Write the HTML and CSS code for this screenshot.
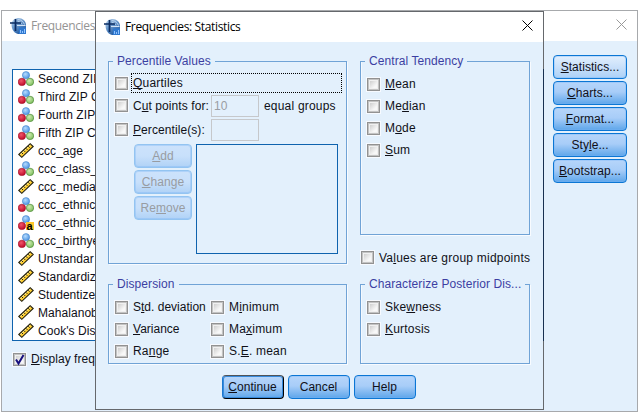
FILE: index.html
```html
<!DOCTYPE html>
<html lang="en">
<head>
<meta charset="utf-8">
<title>Frequencies</title>
<link rel="stylesheet" href="styles.css">
</head>
<body>
<svg width="0" height="0" class="defs">
  <defs>
    <radialGradient id="blue" cx=".4" cy=".35" r=".65"><stop offset="0" stop-color="#b5dcff"/><stop offset="1" stop-color="#4f95e2"/></radialGradient>
    <radialGradient id="red" cx=".4" cy=".35" r=".65"><stop offset="0" stop-color="#f0566a"/><stop offset="1" stop-color="#c00a28"/></radialGradient>
    <radialGradient id="green" cx=".4" cy=".35" r=".65"><stop offset="0" stop-color="#cdebb0"/><stop offset="1" stop-color="#80bf60"/></radialGradient>
    <linearGradient id="disc" x1="0" y1="0" x2=".6" y2="1"><stop offset="0" stop-color="#c3daf0"/><stop offset=".5" stop-color="#6796cb"/><stop offset="1" stop-color="#1d57a0"/></linearGradient>
    <symbol id="app" viewBox="0 0 16 16">
      <path d="M1.500 6C2 2 5 0 8.500 0 12.500 0 16 3.200 16 7v9H8.500C4.500 15.500 1.500 12 1.500 6z" fill="url(#disc)"/>
      <path d="M8 1.500c3.500 .3 5.500 2.500 6.500 5M8 3.500c2 .2 3.500 1.300 4 3" fill="none" stroke="#b9d2ec"/>
      <path d="M0 5h11M5.500 1v12" stroke="#0b2c62" stroke-width="1.700"/>
      <path d="M7 7.500h8.500" stroke="#d3e4f6"/>
      <path d="M9 9.500h7V16H9z" fill="#2f78cf"/>
      <path d="M10.500 15v-3M12.500 15v-2M14.500 15v-4" stroke="#8fc2ff"/>
    </symbol>
    <symbol id="nominal" viewBox="0 0 16 16">
      <circle cx="8" cy="4.200" r="3.600" fill="url(#blue)" stroke="#4483cb" stroke-width=".6"/>
      <circle cx="3.900" cy="10.900" r="3.700" fill="url(#red)" stroke="#a01028" stroke-width=".6"/>
      <circle cx="12" cy="10.900" r="3.700" fill="url(#green)" stroke="#508b3c" stroke-width=".7"/>
    </symbol>
    <symbol id="string" viewBox="0 0 16 16">
      <circle cx="8" cy="4.200" r="3.600" fill="url(#blue)" stroke="#4483cb" stroke-width=".6"/>
      <circle cx="3.900" cy="10.900" r="3.700" fill="url(#red)" stroke="#a01028" stroke-width=".6"/>
      <rect x="8" y="7" width="8" height="8" fill="#ffc629"/>
      <text x="8.600" y="14.600" class="glyph">a</text>
    </symbol>
    <symbol id="scale" viewBox="0 0 16 16">
      <path d="M.8 11.500 12.200.8 15.200 3.500 3.800 14.300z" fill="#ffcf33" stroke="#25210f" stroke-width="1.100"/>
      <path d="M2 11.700 12.400 2" stroke="#fff0a0" stroke-width=".8"/>
      <path d="M3.500 9.500 5 11M5.700 7.400 7.200 8.900M7.900 5.300 9.400 6.800M10.100 3.200 11.600 4.700" stroke="#25210f"/>
    </symbol>
  </defs>
</svg>

<main class="window">
  <header class="titlebar inactive">
    <svg class="app"><use href="#app"/></svg><span>Frequencies</span>
    <svg class="close" viewBox="0 0 11 11"><path d="M.5.5l10 10M10.500.5l-10 10"/></svg>
  </header>
  <div class="content">
    <div class="variables">
      <ul class="list">
        <li><svg><use href="#nominal"/></svg>Second ZIP</li>
        <li><svg><use href="#nominal"/></svg>Third ZIP C</li>
        <li><svg><use href="#nominal"/></svg>Fourth ZIP</li>
        <li><svg><use href="#nominal"/></svg>Fifth ZIP Co</li>
        <li><svg><use href="#scale"/></svg>ccc_age</li>
        <li><svg><use href="#nominal"/></svg>ccc_class_</li>
        <li><svg><use href="#scale"/></svg>ccc_media</li>
        <li><svg><use href="#nominal"/></svg>ccc_ethnic</li>
        <li><svg><use href="#string"/></svg>ccc_ethnic</li>
        <li><svg><use href="#nominal"/></svg>ccc_birthye</li>
        <li><svg><use href="#scale"/></svg>Unstandar</li>
        <li><svg><use href="#scale"/></svg>Standardiz</li>
        <li><svg><use href="#scale"/></svg>Studentize</li>
        <li><svg><use href="#scale"/></svg>Mahalanob</li>
        <li><svg><use href="#scale"/></svg>Cook's Dis</li>
      </ul>
      <div class="check display"><i class="box"><svg viewBox="0 0 13 13"><path d="M3 6.500l2.500 4L10.500 2"/></svg></i><span><u>D</u>isplay freq</span></div>
    </div>
    <nav class="side">
      <button class="btn light"><span><u>S</u>tatistics...</span></button>
      <button class="btn"><span><u>C</u>harts...</span></button>
      <button class="btn"><span><u>F</u>ormat...</span></button>
      <button class="btn"><span>Sty<u>l</u>e...</span></button>
      <button class="btn"><span><u>B</u>ootstrap...</span></button>
    </nav>
  </div>
</main>

<section class="dialog">
  <header class="titlebar">
    <svg class="app"><use href="#app"/></svg><span>Frequencies: Statistics</span>
    <svg class="close" viewBox="0 0 11 11"><path d="M.5.5l10 10M10.500.5l-10 10"/></svg>
  </header>
  <div class="panes">
    <div class="column">
      <fieldset class="percentiles">
        <legend>Percentile Values</legend>
        <div class="check quartiles"><i class="box"></i><span class="focus"><u>Q</u>uartiles</span></div>
        <div class="check entry"><i class="box"></i><span class="caption">C<u>u</u>t points for:</span><span class="field">10</span><span class="suffix">equal groups</span></div>
        <div class="check entry"><i class="box"></i><span class="caption"><u>P</u>ercentile(s):</span><span class="field"></span></div>
        <div class="editor">
          <div class="actions">
            <button class="btn off"><span><u>A</u>dd</span></button>
            <button class="btn off"><span><u>C</u>hange</span></button>
            <button class="btn off"><span>Re<u>m</u>ove</span></button>
          </div>
          <div class="values"></div>
        </div>
      </fieldset>
      <fieldset class="bottom dispersion">
        <legend>Dispersion</legend>
        <div class="check"><i class="box"></i><span class="tight">S<u>t</u>d. deviation</span></div>
        <div class="check"><i class="box"></i><span>M<u>i</u>nimum</span></div>
        <div class="check"><i class="box"></i><span class="tight"><u>V</u>ariance</span></div>
        <div class="check"><i class="box"></i><span>Ma<u>x</u>imum</span></div>
        <div class="check"><i class="box"></i><span>Ra<u>n</u>ge</span></div>
        <div class="check"><i class="box"></i><span>S.<u>E</u>. mean</span></div>
      </fieldset>
    </div>
    <div class="column">
      <fieldset class="central">
        <legend>Central Tendency</legend>
        <div class="check"><i class="box"></i><span><u>M</u>ean</span></div>
        <div class="check"><i class="box"></i><span>Me<u>d</u>ian</span></div>
        <div class="check"><i class="box"></i><span>M<u>o</u>de</span></div>
        <div class="check"><i class="box"></i><span><u>S</u>um</span></div>
      </fieldset>
      <div class="check midpoints"><i class="box"></i><span>Va<u>l</u>ues are group midpoints</span></div>
      <fieldset class="bottom">
        <legend>Characterize Posterior Dis...</legend>
        <div class="check"><i class="box"></i><span>Ske<u>w</u>ness</span></div>
        <div class="check"><i class="box"></i><span><u>K</u>urtosis</span></div>
      </fieldset>
    </div>
  </div>
  <footer class="buttons">
    <button class="btn default"><span><u>C</u>ontinue</span></button>
    <button class="btn"><span>Cancel</span></button>
    <button class="btn"><span>Help</span></button>
  </footer>
</section>
</body>
</html>
```
FILE: styles.css
```css
* { box-sizing: border-box; }
body {
  margin: 0;
  padding: 10px 0 0 1px;
  width: 644px;
  height: 417px;
  overflow: hidden;
  background: #fff;
  color: #101018;
  font: 12px/14px "Liberation Sans", Arial, sans-serif;
  letter-spacing: .2px;
  white-space: nowrap;
}
.defs { position: absolute; }
u { text-decoration: underline; text-decoration-thickness: 1px; text-underline-offset: 1px; text-decoration-skip-ink: none; }
.glyph { font: bold 11px "Liberation Sans", Arial, sans-serif; fill: #000; }

.window {
  width: 637px;
  height: 402px;
  border: 1px solid #a7a9ac;
  background: #e3f0fc;
}
.dialog {
  position: absolute;
  left: 95px;
  top: 11px;
  width: 449px;
  height: 399px;
  border: 1px solid #65686c;
  background: #e3f0fc;
}
.dialog::after {
  content: "";
  position: absolute;
  right: -1px;
  top: 57px;
  width: 1px;
  height: 272px;
  background: #183050;
}
.titlebar {
  display: flex;
  align-items: center;
  height: 30px;
  padding: 0 10px 1px 8px;
  background: #fff;
  color: #000;
  font: 12px/16px "Open Sans", "Noto Sans", sans-serif;
  letter-spacing: -.35px;
}
.titlebar.inactive { color: #949494; }
.app { width: 16px; height: 16px; margin-right: 5px; }
.close { width: 11px; height: 11px; margin: 0 0 2px auto; fill: none; stroke: currentColor; }
.inactive .close { stroke: #999; }

.content { display: flex; justify-content: space-between; padding: 14px 10px 0 10px; }
.variables { width: 110px; padding-top: 14px; letter-spacing: .05px; }
.list {
  margin: 0;
  padding: 0 0 0 5px;
  height: 272px;
  border: 1px solid #0f63ae;
  background: #fff;
  list-style: none;
}
.list li { display: flex; align-items: center; height: 18px; }
.list svg { width: 16px; height: 16px; margin-right: 4px; flex: none; }
.side { display: flex; flex-direction: column; gap: 2px; width: 74px; }

.btn {
  height: 24px;
  padding: 0;
  border: 1px solid #0b76d4;
  border-radius: 4px;
  background: linear-gradient(#b6d5fa, #a8cdf8 45%, #5ea6ea);
  box-shadow: inset 0 0 0 1px rgba(120, 180, 245, .35);
  color: inherit;
  font: inherit;
  letter-spacing: .05px;
}
.btn.light { background: linear-gradient(#e2effd, #c9e0fa 50%, #acd1f7); }
.btn.off { border-color: #93c4f1; background: linear-gradient(#cce2fb, #c8e0fb 50%, #b0d2f6); color: #989ca2; }
.btn.default { border-color: #4f5358 #000 #000 #1a78d0; box-shadow: inset 0 0 0 1px #388adb; }

.check { display: flex; align-items: center; height: 22px; }
.box {
  flex: none;
  width: 13px;
  height: 13px;
  margin-right: 5px;
  border: 1px solid #929292;
  background: linear-gradient(135deg, #cfcfcf, #f8f8f8 75%) content-box, #f0f0f0;
  padding: 2px;
  box-shadow: 0 0 0 1px #f7faff, inset 0 0 0 1px #c3c3c3;
}
.box svg { display: block; width: 13px; height: 13px; margin: -3px; fill: none; stroke: #17107e; stroke-width: 2; }
.display { margin-top: 7px; padding-left: 1px; }
.tight { letter-spacing: 0; }

.panes { display: flex; gap: 13px; padding: 12px 12px 0; }
.column:first-child { width: 239px; }
.column:last-child { width: 170px; }
fieldset {
  min-width: 0;
  margin: 0;
  padding: 5px 4px 0 6px;
  border: 1px solid #70a3d6;
  box-shadow: 1px 1px 0 #f8fbff, inset 1px 0 0 #f4f9ff;
}
legend { margin-left: -2px; padding: 0 4px; background: #e3f0fc; color: #3c3fa2; letter-spacing: .08px; }
.percentiles { height: 210px; margin-bottom: 13px; }
.quartiles { height: 20px; }
.focus { flex: 1; height: 20px; padding: 2px 0 0 1px; margin-left: -2px; border: 1px dotted #000; }
.entry { height: 24px; }
.quartiles + .entry { margin-top: 1px; }
.entry .box { margin-bottom: 1px; }
.caption { width: 78px; letter-spacing: .08px; }
.field { width: 48px; height: 22px; padding: 3px 2px; border: 1px solid #c6c8cb; color: #9a9da3; }
.suffix { margin-left: 5px; }
.editor { display: flex; gap: 4px; margin: 2px 0 0 19px; }
.actions { display: flex; flex-direction: column; gap: 2px; width: 58px; }
.values { width: 142px; height: 110px; border: 1px solid #0f63ae; }
.central { height: 181px; }
.midpoints { height: 15px; margin: 15px 0 12px 1px; letter-spacing: .23px; }
.bottom { height: 87px; }
.dispersion { display: grid; grid-template-columns: 96px 1fr; align-content: start; }

.buttons { display: flex; gap: 4px; justify-content: center; margin: 11px 2px 0 0; }
.buttons .btn { width: 62px; }
```
